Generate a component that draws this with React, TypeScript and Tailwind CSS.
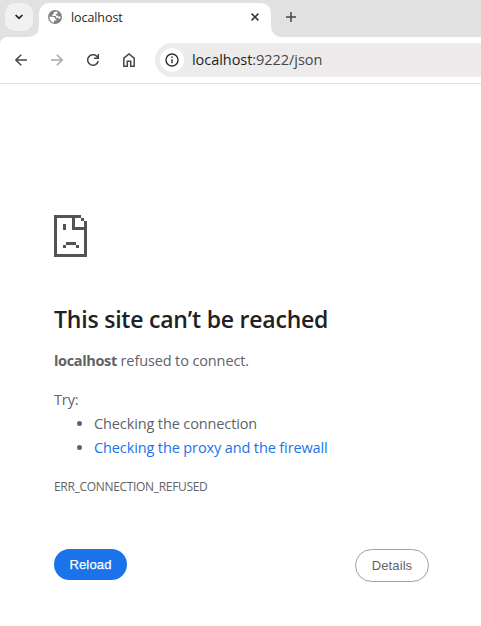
import React from "react";

const UI = "font-['Open_Sans','Noto_Sans',sans-serif]";

function TabStrip() {
  return (
    <div className="flex h-[37px] items-end bg-[#e1e1e1]">
      <div className="flex h-[37px] w-[39px] shrink-0 pl-[5px] pt-[3px]">
        <button className="flex size-7 items-center justify-center rounded-[10px] bg-[#f1f1f1]">
          <svg width="8" height="6" viewBox="0 0 8 6" fill="none" stroke="#1f1f1f" strokeWidth="1.7">
            <path d="M.6 1 4 4.4 7.4 1" />
          </svg>
        </button>
      </div>
      <div className="relative flex h-[34px] w-[232px] items-center rounded-t-[10px] bg-white pl-[9px] pr-[12px] pb-[6px]">
        <svg className="absolute bottom-0 -left-[10px]" width="10" height="10">
          <path d="M10 0V10H0A10 10 0 0 0 10 0Z" fill="#fff" />
        </svg>
        <svg className="absolute bottom-0 -right-[10px]" width="10" height="10">
          <path d="M0 0V10H10A10 10 0 0 1 0 0Z" fill="#fff" />
        </svg>
        <svg width="14" height="14" viewBox="0 0 14 14" className="shrink-0">
          <circle cx="7" cy="7" r="7" fill="#808080" />
          <path d="M8.4 1.4C6.5 1.4 5.6 2.3 5.6 3.5v.9H4.3v1.7h3.6v1.6h1.6c.8 0 1.3.4 1.3 1.1h1.5c.3-.8.3-1.5.2-2.3h-1.9c-.6 0-.9-.3-.9-.9H7.8V4h1.5V2.7h1z" fill="#fff" />
          <path d="M1.4 6.8h3.1c1.6 0 2.6.9 2.6 2.2h1.2v1.5H6v2.2C3.3 12.4 1.3 10 1.4 6.8Z" fill="#fff" />
        </svg>
        <span className="ml-[9px] pt-px text-[12.5px] leading-4 tracking-[-0.08px] text-[#1f1f1f]">localhost</span>
        <svg className="ml-auto" width="8" height="8" viewBox="0 0 8 8" stroke="#303030" strokeWidth="1.5">
          <path d="m.6.6 6.8 6.8M7.4.6.6 7.4" />
        </svg>
      </div>
      <svg className="mb-[15px] ml-[15px]" width="10" height="10" viewBox="0 0 10 10" stroke="#474747" strokeWidth="1.5">
        <path d="M5 0v10M0 5h10" />
      </svg>
    </div>
  );
}

function Toolbar() {
  return (
    <div className="bg-[#e1e1e1]">
      <div className="flex h-[47px] items-center rounded-tl-[7px] border-b border-[#dedede] bg-white pl-[15px]">
        <svg width="12" height="12" viewBox="0 0 12 12" fill="none" stroke="#474747" strokeWidth="1.5">
          <path d="M12 6H1M6.2.7.9 6l5.3 5.3" />
        </svg>
        <svg className="ml-6" width="12" height="12" viewBox="0 0 12 12" fill="none" stroke="#a8a8a8" strokeWidth="1.5">
          <path d="M0 6h11M5.8.7 11.1 6l-5.3 5.3" />
        </svg>
        <svg className="ml-6" width="12" height="12" viewBox="0 0 12 12" fill="none" stroke="#474747" strokeWidth="1.5">
          <path d="M11.2 7A5.3 5.3 0 1 1 9.8 2.3L11.3 4M11.3 0v4.3H7" />
        </svg>
        <svg className="ml-6" width="12" height="14" viewBox="0 0 12 14" fill="none" stroke="#474747" strokeWidth="1.5">
          <path d="M.8 13.2V5.1L6 1l5.2 4.1v8.1H7.7V8.3H4.3v4.9Z" />
        </svg>
        <div className="ml-5 flex h-[34px] flex-1 items-center rounded-l-full bg-[#edebec] pl-[5px]">
          <span className="flex size-6 items-center justify-center rounded-full bg-white">
            <svg width="14" height="14" viewBox="0 0 14 14" fill="none" stroke="#303030" strokeWidth="1.4">
              <circle cx="7" cy="7" r="6" />
              <path d="M7 6.2v4M7 3.6v1.5" />
            </svg>
          </span>
          <span className="ml-2 text-[14.5px] leading-5 tracking-[-0.05px] text-[#1f1f1f]">
            localhost<span className="text-[#474747]">:9222/json</span>
          </span>
        </div>
      </div>
    </div>
  );
}

function SadPage() {
  return (
    <svg width="33" height="42" viewBox="0 0 33 42" fill="#535353" shapeRendering="crispEdges">
      <path d="M0 0h27v3h-6v9h12v3H18V3H3v36h27V6h3v36H0zM27 3h3v3h-3zM9 9h3v6H9zM12 27h10v3H12zM9 30h3v3H9zM22 30h3v3h-3z" />
    </svg>
  );
}

export default function App() {
  return (
    <div className={`h-[626px] w-[481px] overflow-hidden bg-white ${UI}`}>
      <TabStrip />
      <Toolbar />
      <main className="pl-[54px] pr-[52px] pt-[131px] text-[14.5px] leading-6 tracking-[-0.12px] text-[#5f6368]">
        <SadPage />
        <h1 className="mt-[48px] whitespace-nowrap text-[23px] font-semibold leading-[29px] tracking-[-0.21px] text-[#202124]">This site can’t be reached</h1>
        <p className="mt-[15px]"><strong className="tracking-[-0.35px]">localhost</strong> refused to connect.</p>
        <p className="mt-[15px]">Try:</p>
        <ul className="list-disc whitespace-nowrap pl-10">
          <li>Checking the connection</li>
          <li className="marker:text-[#5f6368]"><a className="text-[#1a73e8]">Checking the proxy and the firewall</a></li>
        </ul>
        <p className="mt-[15px] text-[12px] tracking-[-0.32px]">ERR_CONNECTION_REFUSED</p>
        <div className="mt-[50px] flex items-start justify-between font-['Liberation_Sans',Arial,sans-serif] text-[13px] tracking-[0.1px]">
          <button className="h-[31px] w-[73px] rounded-full bg-[#1a73e8] tracking-[0.15px] text-white [-webkit-text-stroke:0.25px_white]">Reload</button>
          <button className="h-[33px] w-[74px] rounded-full border border-[#9aa0a6] tracking-[0.1px]">Details</button>
        </div>
      </main>
    </div>
  );
}
